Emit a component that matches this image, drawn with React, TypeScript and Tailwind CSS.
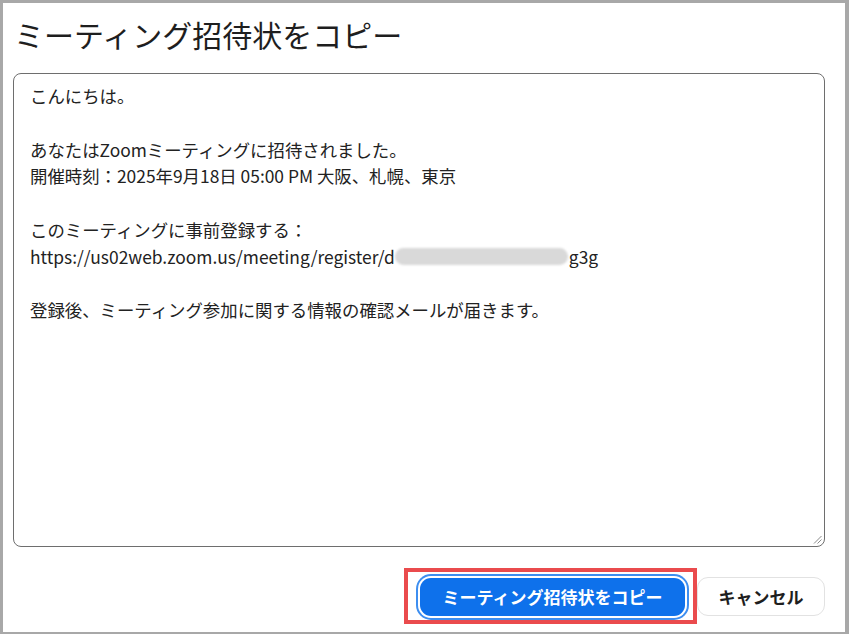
import React from "react";

const font = { fontFamily: '"Noto Sans CJK JP", "Noto Sans", sans-serif' };

export default function App() {
  return (
    <div
      className="w-[849px] h-[634px] bg-white border-t-[3px] border-l-[3px] border-r-4 border-b-2 border-[#a8a8a8] flex flex-col text-[#222222]"
      style={font}
    >
      <h1 className="text-[30px] leading-[40px] font-normal pl-[11px] pt-[11px] text-[#1e1e1e]">
        ミーティング招待状をコピー
      </h1>
      <div className="relative ml-[10px] mt-[19px] w-[812px] h-[474px] border border-[#6e6e6e] rounded-[8px] pl-[16px] pt-[9px] text-[17.4px] leading-[26.75px]">
        <div>こんにちは。</div>
        <div>&nbsp;</div>
        <div>あなたはZoomミーティングに招待されました。</div>
        <div>開催時刻：2025年9月18日 05:00 PM 大阪、札幌、東京</div>
        <div>&nbsp;</div>
        <div>このミーティングに事前登録する：</div>
        <div className="flex items-center">
          <span>https://us02web.zoom.us/meeting/register/d</span>
          <span className="inline-block w-[173px] h-[17px] rounded-full bg-[#d9d9d9] blur-[1px]" />
          <span className="ml-[1px]">g3g</span>
        </div>
        <div>&nbsp;</div>
        <div>登録後、ミーティング参加に関する情報の確認メールが届きます。</div>
        <svg
          className="absolute right-[2px] bottom-[2px]"
          width="9"
          height="9"
          viewBox="0 0 9 9"
        >
          <line x1="1" y1="8.5" x2="8.5" y2="1" stroke="#8a8a8a" strokeWidth="1" />
          <line x1="4.5" y1="8.5" x2="8.5" y2="4.5" stroke="#8a8a8a" strokeWidth="1" />
        </svg>
      </div>
      <div className="flex items-center justify-end mt-[30px] pr-[20px] gap-[12px]">
        <div className="relative">
          <button className="h-[38px] w-[265px] rounded-[11px] bg-[#0e71eb] text-white text-[17px] font-bold ring-2 ring-[#3d8ef0] ring-offset-2 ring-offset-white">
            ミーティング招待状をコピー
          </button>
          <span className="absolute left-[-16px] right-[-12px] top-[-10px] bottom-[-8px] border-[4px] border-[#ea4b4d] pointer-events-none" />
        </div>
        <button className="h-[39px] w-[128px] rounded-[11px] bg-white border border-[#e2e2e2] text-[17px] font-bold text-[#1e1e1e]">
          キャンセル
        </button>
      </div>
    </div>
  );
}
